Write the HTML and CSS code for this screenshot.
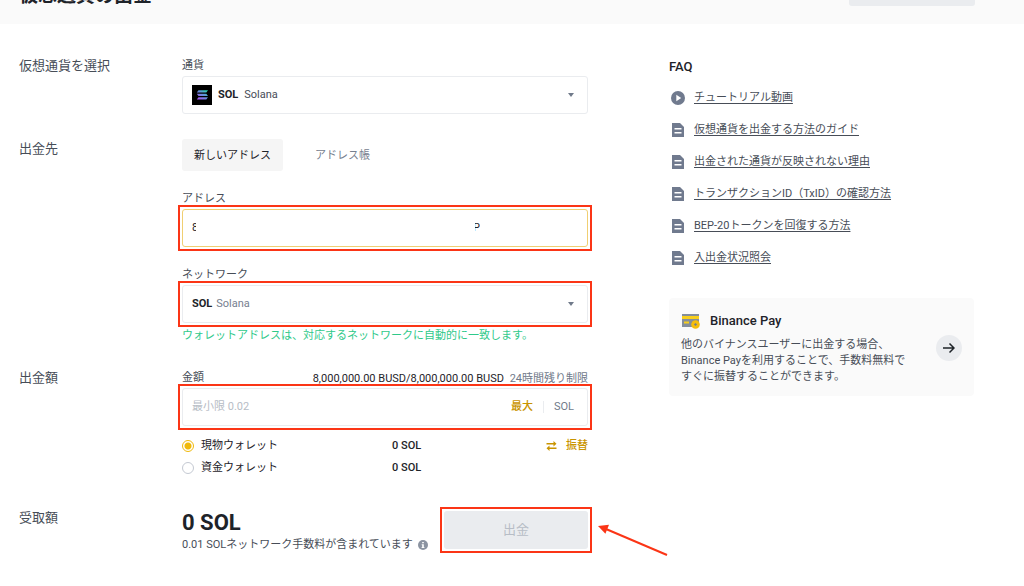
FILE: index.html
```html
<!DOCTYPE html>
<html lang="ja">
<head>
<meta charset="utf-8">
<meta name="viewport" content="width=device-width, initial-scale=1">
<title>仮想通貨の出金</title>
<link rel="stylesheet" href="styles.css">
</head>
<body>
<svg class="sprite" aria-hidden="true">
  <symbol id="doc" viewBox="0 0 12 14"><path fill="#707a8e" fill-rule="evenodd" d="M0 0h8l4 4v10H0zM2.500 5v1.500h7V5zM2.500 9v1.500h7V9z"/></symbol>
  <symbol id="caret" viewBox="0 0 6 4"><path fill="#707a8a" d="M0 0h6L3 4z"/></symbol>
</svg>
<header class="topbar">
  <h1 class="title">仮想通貨の出金</h1>
  <button class="top-button" type="button" aria-label="入金"></button>
</header>
<main class="page">
  <form class="form">
    <section class="row">
      <h2 class="row-title">仮想通貨を選択</h2>
      <div>
        <label class="label" for="coin">通貨</label>
        <div class="field">
          <svg class="coin-icon" viewBox="0 0 20 20" aria-hidden="true">
            <defs><linearGradient id="sol" x1="0" y1="1" x2="1" y2="0"><stop offset="0" stop-color="#b04df2"/><stop offset=".5" stop-color="#6b8be0"/><stop offset="1" stop-color="#20e0a8"/></linearGradient></defs>
            <path fill="#000" d="M0 0h20v20H0z"/>
            <path fill="url(#sol)" d="M6.500 5.200H16L14.300 7.500H4.800zM4.800 8.700h9.500L16 11H6.500zM6.500 12.200H16l-1.700 2.300H4.800z"/>
          </svg>
          <b class="ticker">SOL</b>
          <select class="select select-wide" id="coin"><option>Solana</option></select>
          <svg class="caret"><use href="#caret"/></svg>
        </div>
      </div>
    </section>

    <section class="row">
      <h2 class="row-title">出金先</h2>
      <div>
        <div class="tabs">
          <button class="tab tab-active" type="button">新しいアドレス</button>
          <button class="tab" type="button">アドレス帳</button>
        </div>
        <label class="label" for="address">アドレス</label>
        <div class="field field-focus marked">
          <input class="input" id="address" type="text" value="8">
          <span class="concealed"><span class="tail">P</span></span>
        </div>
        <label class="label label-next" for="network">ネットワーク</label>
        <div class="field marked">
          <b class="ticker">SOL</b>
          <select class="select muted" id="network"><option>Solana</option></select>
          <svg class="caret"><use href="#caret"/></svg>
        </div>
        <p class="match">ウォレットアドレスは、対応するネットワークに自動的に一致します。</p>
      </div>
    </section>

    <section class="row">
      <h2 class="row-title">出金額</h2>
      <div>
        <div class="amount-head">
          <label class="label" for="amount">金額</label>
          <p class="limit">8,000,000.00 BUSD/8,000,000.00 BUSD <span class="limit-note">24時間残り制限</span></p>
        </div>
        <div class="field marked">
          <input class="input" id="amount" type="text" placeholder="最小限 0.02">
          <button class="link-button" type="button">最大</button>
          <span class="unit">SOL</span>
        </div>
        <div class="wallets">
          <label class="wallet"><input class="radio" type="radio" name="wallet" checked>現物ウォレット</label>
          <span class="balance">0 SOL</span>
          <button class="link-button transfer" type="button">
            <svg class="swap" viewBox="0 0 10 10" aria-hidden="true"><path fill="#c99400" d="M0 2h7V0l3 2.700L7 5.400V3.400H0zM10 8H3v2L0 7.300 3 4.600v2h7z"/></svg>振替</button>
          <label class="wallet"><input class="radio" type="radio" name="wallet">資金ウォレット</label>
          <span class="balance">0 SOL</span>
        </div>
      </div>
    </section>

    <section class="row">
      <h2 class="row-title">受取額</h2>
      <div class="receive">
        <div>
          <p class="total">0 SOL</p>
          <p class="fee">0.01 SOLネットワーク手数料が含まれています
            <svg class="info" viewBox="0 0 10 10" aria-hidden="true"><circle cx="5" cy="5" r="5" fill="#8b93a1"/><path fill="#fff" d="M4.200 2h1.600v1.300H4.200zM3.700 4.200h2.100v3h.7v.9H3.500v-.9h.7v-2h-.5z"/></svg></p>
        </div>
        <div class="submit-box marked">
          <button class="submit" type="submit" disabled>出金</button>
          <svg class="arrow" viewBox="0 0 72 34" aria-hidden="true"><path stroke="#fb3516" stroke-width="2" d="M8 5l61 26"/><path fill="#fb3516" d="M0 2l11-1.200-3.600 9z"/></svg>
        </div>
      </div>
    </section>
  </form>

  <aside>
    <h2 class="faq-title">FAQ</h2>
    <ul class="faq">
      <li class="faq-item"><svg class="faq-icon" viewBox="-1 0 14 14" aria-hidden="true"><circle cx="6" cy="7" r="7" fill="#707a8e"/><path fill="#fff" d="M4.300 3.800v6.400L9.200 7z"/></svg><a class="faq-link" href="#">チュートリアル動画</a></li>
      <li class="faq-item"><svg class="faq-icon"><use href="#doc"/></svg><a class="faq-link" href="#">仮想通貨を出金する方法のガイド</a></li>
      <li class="faq-item"><svg class="faq-icon"><use href="#doc"/></svg><a class="faq-link" href="#">出金された通貨が反映されない理由</a></li>
      <li class="faq-item"><svg class="faq-icon"><use href="#doc"/></svg><a class="faq-link" href="#">トランザクションID（TxID）の確認方法</a></li>
      <li class="faq-item"><svg class="faq-icon"><use href="#doc"/></svg><a class="faq-link" href="#">BEP-20トークンを回復する方法</a></li>
      <li class="faq-item"><svg class="faq-icon"><use href="#doc"/></svg><a class="faq-link" href="#">入出金状況照会</a></li>
    </ul>
    <section class="card">
      <div>
        <h3 class="card-title">
          <svg class="card-icon" viewBox="0 0 18 15" aria-hidden="true"><path fill="#848e9c" d="M0 0h17v13H0z"/><path fill="#f8cf1c" d="M0 2h17v3H0zM2 7.500h5v2H2z"/><circle cx="13.500" cy="10.500" r="4.300" fill="#f5bd0b"/><path fill="#76808f" d="M13.500 8.900l1.600 1.600-1.600 1.600-1.600-1.600z"/></svg>Binance Pay</h3>
        <p class="card-text">他のバイナンスユーザーに出金する場合、<br>Binance Payを利用することで、手数料無料で<br>すぐに振替することができます。</p>
      </div>
      <button class="go" type="button" aria-label="Binance Pay">
        <svg class="go-icon" viewBox="0 0 12 12" aria-hidden="true"><path fill="none" stroke="#1e2329" stroke-width="1.500" d="M0 6h11M6.500 1.500L11 6l-4.500 4.500"/></svg>
      </button>
    </section>
  </aside>
</main>
</body>
</html>
```

FILE: styles.css
```css
* { box-sizing: border-box; }
body {
  margin: 0;
  background: #fff;
  color: #474d57;
  font: 11px/18px Roboto, "Noto Sans CJK JP", sans-serif;
}
h1, h2, h3, p, ul { margin: 0; padding: 0; font-weight: 400; }
button, input, select { font: inherit; color: inherit; margin: 0; }
button { border: 0; padding: 0; background: none; }
.sprite { display: none; }

.topbar {
  display: flex;
  justify-content: space-between;
  align-items: flex-end;
  height: 24px;
  padding: 0 49px 18px 19px;
  overflow: hidden;
  background: #fafafa;
}
.title { font-size: 19px; line-height: 20px; font-weight: 700; color: #1e2329; }
.top-button { width: 126px; height: 32px; flex: none; border-radius: 3px; background: #eaecef; }

.page {
  display: grid;
  grid-template-columns: minmax(0, 569fr) minmax(0, 305fr);
  gap: 81px;
  padding: 32px 50px 24px 19px;
}
.form { display: grid; gap: 25px; }
.row { display: grid; grid-template-columns: 163px minmax(0, 1fr); }
.row-title { font-size: 13px; line-height: 20px; }
.label { display: block; line-height: 20px; }
.label-next { margin-top: 18px; }

.field {
  position: relative;
  display: flex;
  align-items: center;
  height: 38px;
  padding: 0 9px;
  border: 1px solid #eaecef;
  border-radius: 3px;
}
.field-focus { border-color: #f0cf72; }
.marked { position: relative; }
.marked::after {
  content: "";
  position: absolute;
  inset: -5px;
  border: 2px solid #fb3516;
  pointer-events: none;
}
.coin-icon { width: 20px; height: 20px; margin-right: 6px; }
.ticker { font-weight: 700; color: #1e2329; }
.select {
  flex: 1;
  min-width: 0;
  padding: 0 0 0 4px;
  border: 0;
  outline: 0;
  appearance: none;
  background: none;
}
.select-wide { padding-left: 6px; }
.muted { color: #76808f; }
.caret { width: 6px; height: 4px; margin-right: 4px; }
.input { flex: 1; min-width: 0; padding: 0; border: 0; outline: 0; background: none; color: #1e2329; }
.input::placeholder { color: #b7bdc6; opacity: 1; }
/* hides the middle of the wallet address */
.concealed {
  position: absolute;
  inset: 4px 107px 4px 13px;
  display: flex;
  justify-content: flex-end;
  align-items: center;
  background: #fff;
}
.tail { display: flex; justify-content: flex-end; width: 5px; overflow: hidden; color: #1e2329; }

.tabs { display: flex; gap: 20px; margin-bottom: 18px; }
.tab { height: 32px; padding: 1px 12px 0; border-radius: 3px; color: #76808f; }
.tab-active { background: #f5f5f5; color: #1e2329; }
.match { margin-top: 5px; line-height: 15px; color: #2fc98a; }

.amount-head { display: flex; justify-content: space-between; }
.limit { padding-top: 2px; color: #1e2329; }
.limit-note { margin-left: 3px; color: #707a8a; }
.link-button { color: #c99400; font-weight: 500; }
.unit { margin-left: 10px; padding: 0 4px 0 10px; border-left: 1px solid #eaecef; line-height: 12px; color: #707a8a; }

.wallets {
  display: grid;
  grid-template-columns: 210px 1fr auto;
  grid-auto-rows: 22px;
  align-items: center;
  margin: 9px 0 4px;
  color: #1e2329;
}
.wallet { display: flex; align-items: center; gap: 7px; }
.radio {
  appearance: none;
  width: 12px;
  height: 12px;
  border: 1px solid #c4c9d2;
  border-radius: 50%;
}
.radio:checked { border-color: #f0b90b; background: radial-gradient(circle, #f0b90b 3px, #fff 4px); }
.balance { font-weight: 500; }
.transfer { display: flex; align-items: center; gap: 9px; }
.swap { width: 11px; height: 10px; }

.receive { display: flex; justify-content: space-between; padding-top: 2px; }
.total { font-size: 22px; line-height: 26px; font-weight: 700; color: #1e2329; }
.info { width: 10px; height: 10px; margin-left: 2px; vertical-align: -2px; }
.submit-box { width: 144px; height: 38px; margin-top: 1px; }
.submit-box::after { inset: -4px; }
.submit { width: 100%; height: 100%; border-radius: 3px; background: #eaecef; color: #b7bdc6; font-size: 13px; }
.arrow { position: absolute; left: 154px; top: 13px; width: 72px; height: 34px; }

.faq-title { font-size: 13px; line-height: 22px; font-weight: 500; color: #1e2329; }
.faq { display: grid; gap: 14px; margin: 11px 0 31px; list-style: none; }
.faq-item { display: flex; align-items: center; gap: 9px; }
.faq-icon { width: 14px; height: 14px; margin-left: 2px; flex: none; }
.faq-link { color: #474d57; text-underline-offset: 2px; }

.card {
  display: flex;
  justify-content: space-between;
  align-items: center;
  padding: 12px 12px 11px;
  border-radius: 4px;
  background: #fafafa;
}
.card-title { display: flex; align-items: center; gap: 10px; margin-bottom: 5px; padding-left: 1px; font-size: 13px; line-height: 22px; font-weight: 500; color: #1e2329; }
.card-icon { width: 18px; height: 15px; }
.card-text { line-height: 16px; white-space: nowrap; }
.go { display: grid; place-items: center; width: 26px; height: 26px; flex: none; border-radius: 50%; background: #eaecef; }
.go-icon { width: 12px; height: 12px; }
```
